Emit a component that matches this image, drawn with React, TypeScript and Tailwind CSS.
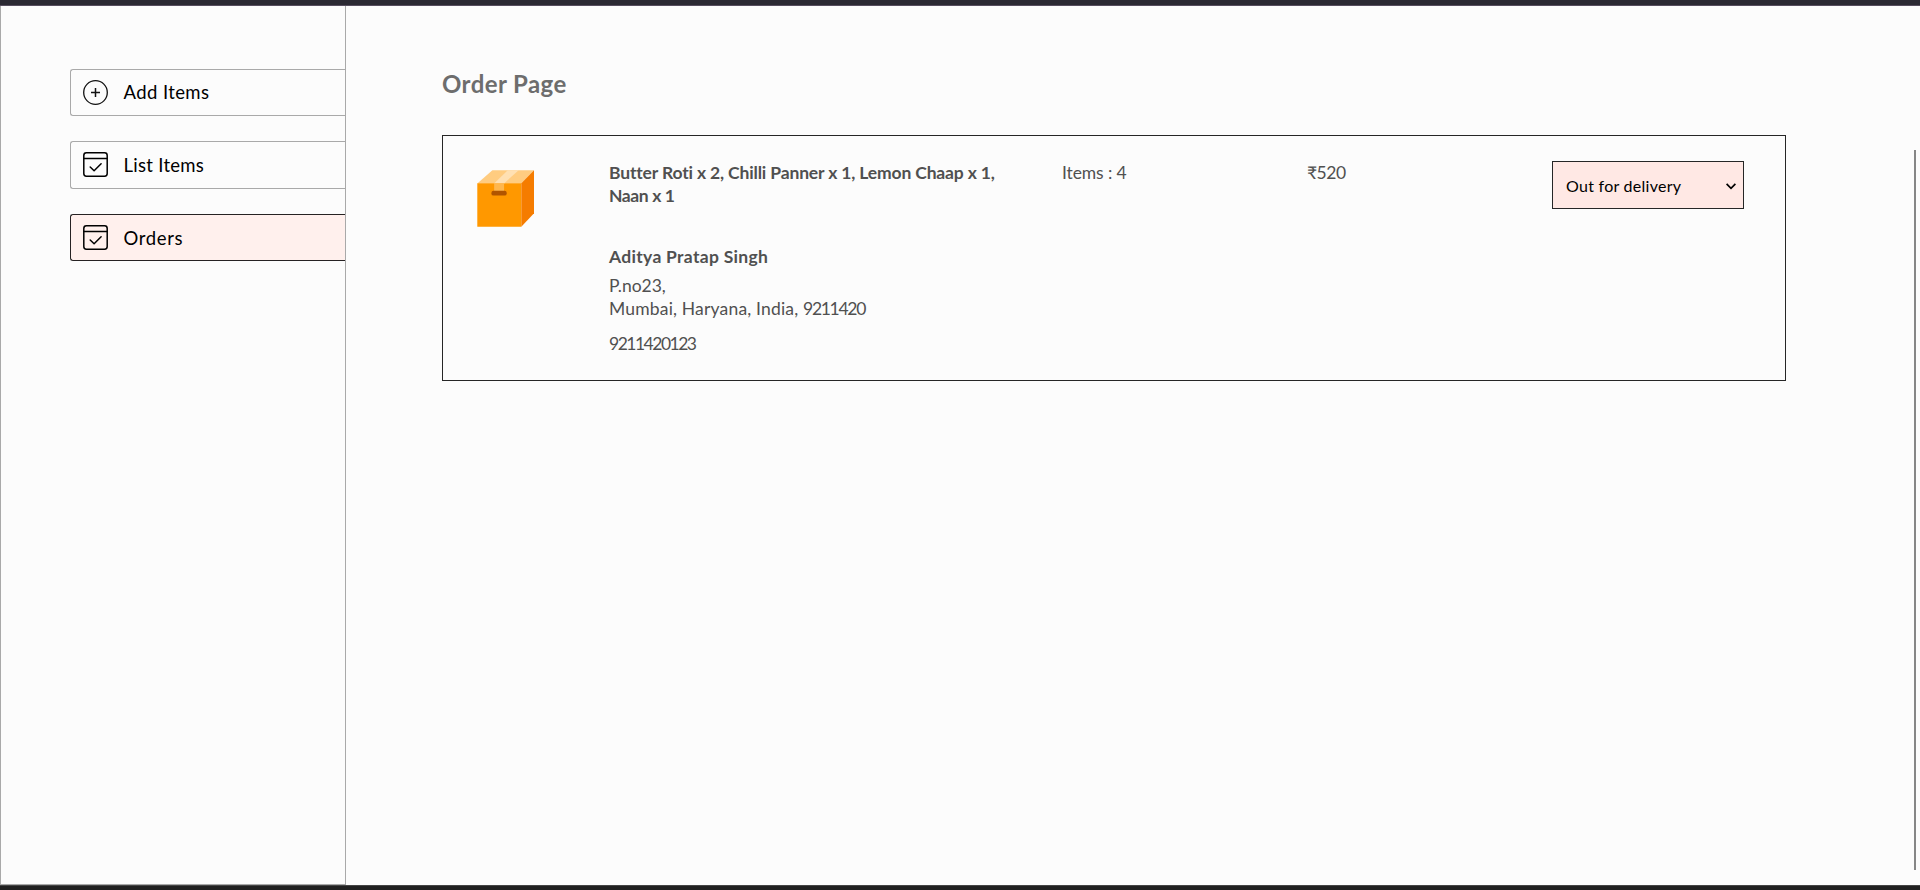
import React from 'react';

function AddIcon() {
  return (
    <svg width="25" height="25" viewBox="0 0 25 25" fill="none" stroke="#111" strokeWidth="1.3" className="shrink-0">
      <circle cx="12.5" cy="12.5" r="11.8" />
      <path d="M12.5 8v9M8 12.5h9" strokeWidth="1.5" />
    </svg>
  );
}

function OrderIcon() {
  return (
    <svg width="25" height="25" viewBox="0 0 25 25" fill="none" stroke="#000" strokeWidth="1.5" strokeLinecap="round" strokeLinejoin="round" className="-mt-px shrink-0">
      <rect x="0.8" y="0.8" width="23.4" height="23.4" rx="2.6" />
      <path d="M1 6.5h23" />
      <path d="M7.2 15l3.9 3.8 7-7" />
    </svg>
  );
}

function ParcelIcon() {
  return (
    <svg width="57.5" height="57.5" viewBox="0 0 58 58">
      <path d="M0.3 13.5L15.5 0.3H57.5L44.5 13.5z" fill="#ffcc80" />
      <path d="M0.3 13.3H44.7V57.3H0.3z" fill="#ff9800" />
      <path d="M44.7 13.3L57.5 0.3V43.5L44.7 57.3z" fill="#f57c00" />
      <path d="M17.3 13.5L31 0.3H42L27.3 13.5z" fill="#ffe0b2" />
      <path d="M17.3 13.3h10v8h-10z" fill="#ffb74d" />
      <rect x="14.5" y="21" width="15.5" height="4.8" rx="2.2" fill="#b15500" />
    </svg>
  );
}

function Sidebar() {
  return (
    <aside className="w-[346px] shrink-0 border border-t-0 border-[#a9a9a9] pl-[69px] pt-[63px] text-[18.5px] leading-[22px] text-black">
      <nav className="flex flex-col">
        <a className="mb-[25px] flex h-[47px] items-center gap-[15.5px] rounded-l-[3px] border border-r-0 border-[#a9a9a9] pl-3">
          <AddIcon />
          <span className="-mt-0.5 whitespace-nowrap tracking-[0.4px]">Add Items</span>
        </a>
        <a className="mb-[25px] flex h-12 items-center gap-[15.5px] rounded-l-[3px] border border-r-0 border-[#a9a9a9] pl-3">
          <OrderIcon />
          <span className="whitespace-nowrap tracking-[0.28px]">List Items</span>
        </a>
        <a className="flex h-[47px] items-center gap-[15.5px] rounded-l-[3px] border border-r-0 border-[#262223] bg-[#fff0ed] pl-3">
          <OrderIcon />
          <span className="whitespace-nowrap tracking-[0.65px]">Orders</span>
        </a>
      </nav>
    </aside>
  );
}

function OrderCard() {
  return (
    <article className="flex h-[246px] w-[1344px] items-start border border-[#262626] pt-[25px] text-[17.5px] leading-[23px] text-[#505050]">
      <div className="w-[166px] shrink-0 pl-[33.5px] pt-[9px]">
        <ParcelIcon />
      </div>
      <div className="w-[453px] shrink-0 whitespace-nowrap">
        <p className="font-bold tracking-[-0.15px]">
          Butter Roti x 2, Chilli Panner x 1, Lemon Chaap x 1,
          <br />
          <span className="tracking-[-0.4px]">Naan x 1</span>
        </p>
        <p className="mt-[38px] font-bold tracking-[0.3px]">Aditya Pratap Singh</p>
        <p className="mt-[6px]">P.no23,</p>
        <p>
          <span className="tracking-[0.18px]">Mumbai, Haryana, India, </span>
          <span className="tracking-[-1.3px]">9211420</span>
        </p>
        <p className="mt-3 tracking-[-1.5px]">9211420123</p>
      </div>
      <p className="w-[245px] shrink-0 tracking-[-0.1px]">Items : 4</p>
      <p className="w-[245px] shrink-0 tracking-[-0.5px]">₹520</p>
      <button className="flex h-12 w-48 items-center justify-between border border-[#262626] bg-[#ffe8e4] pl-[13px] pr-[7px] text-[16px] text-black">
        <span className="whitespace-nowrap pt-px tracking-[0.27px]">Out for delivery</span>
        <svg width="10" height="7" viewBox="0 0 10 7" fill="none" stroke="#000" strokeWidth="1.7" className="mt-0.5">
          <path d="M0.6 0.9L5 5.4 9.4 0.9" />
        </svg>
      </button>
    </article>
  );
}

export default function App() {
  return (
    <div className="flex h-[890px] w-full flex-col overflow-hidden bg-[#fcfcfc] font-['Lato',sans-serif]">
      <div className="h-[6px] shrink-0 border-b border-[#564d5e] bg-[#2b2933]" />
      <div className="flex h-[879px] shrink-0">
        <Sidebar />
        <main className="min-w-0 flex-1 pl-24 pt-[63px]">
          <h3 className="mb-[36px] text-[24px] font-bold leading-[30px] tracking-[0.42px] text-[#6d6d6d]">Order Page</h3>
          <OrderCard />
        </main>
        <div className="mr-1 mt-36 h-[720px] w-[2px] shrink-0 bg-[#868686]" />
      </div>
      <div className="h-[5px] shrink-0 border-t border-[#444] bg-[#202020]" />
    </div>
  );
}
